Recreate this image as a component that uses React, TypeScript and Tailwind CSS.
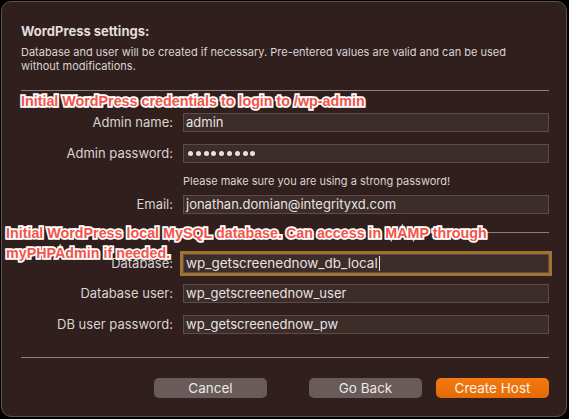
import React from "react";

const ui = "font-['Inter','Noto_Sans',sans-serif]";

function Label({ children }: { children: React.ReactNode }) {
  return (
    <div className="text-right text-[13px] leading-[19px] text-[#d9d3d2] whitespace-nowrap">{children}</div>
  );
}

function Field({ value }: { value: string }) {
  return (
    <div className="h-[19px] bg-[#3c2c2a] border border-[#5b4c4a] px-[2px] text-[13px] leading-[17px] text-[#e6e2e1] whitespace-nowrap overflow-hidden">
      {value}
    </div>
  );
}

function Row({ label, children, className = "" }: { label: string; children: React.ReactNode; className?: string }) {
  return (
    <div className={`grid grid-cols-[152px_1fr] gap-x-[10px] items-center ${className}`}>
      <Label>{label}</Label>
      {children}
    </div>
  );
}

const annot =
  "font-['Liberation_Sans',Arial,sans-serif] font-bold text-[14.3px] tracking-[0px] text-[#f2554a] [-webkit-text-stroke:3.5px_#ffffff] [paint-order:stroke_fill] whitespace-nowrap";

export default function App() {
  return (
    <div className={`w-[569px] h-[419px] bg-black pt-[1px] pl-[1px] ${ui}`}>
      <div className="relative w-[566px] h-[416px] rounded-[10px] border border-[#5e5150] bg-[#311f1e] pl-[19px] pr-[17px] pt-[21px] flex flex-col">
        <div className="text-[13px] leading-[16px] font-bold text-[#e2dddc]">WordPress settings:</div>
        <div className="mt-[7px] text-[11px] leading-[13.5px] text-[#d9d3d2] whitespace-nowrap">
          Database and user will be created if necessary. Pre-entered values are valid and can be used
          <br />
          without modifications.
        </div>
        <div className="mt-[17px] h-px bg-[#8a7e7d]" />
        <div className="h-[22px] flex items-center">
          <span className={annot}>Initial WordPress credentials to login to /wp-admin</span>
        </div>
        <Row label="Admin name:">
          <Field value="admin" />
        </Row>
        <Row label="Admin password:" className="mt-[12px]">
          <div className="h-[19px] bg-[#3c2c2a] border border-[#5b4c4a] pl-[4px] flex items-center gap-[2.8px]">
            {Array.from({ length: 9 }).map((_, i) => (
              <span key={i} className="w-[5px] h-[5px] rounded-full bg-[#e6e2e1]" />
            ))}
          </div>
        </Row>
        <div className="grid grid-cols-[152px_1fr] gap-x-[10px] mt-[11px]">
          <div />
          <div className="text-[11px] leading-[14px] text-[#d9d3d2] whitespace-nowrap">
            Please make sure you are using a strong password!
          </div>
        </div>
        <Row label="Email:" className="mt-[7px]">
          <Field value="jonathan.domian@integrityxd.com" />
        </Row>
        <div className="mt-[18px] h-px bg-[#8a7e7d]" />
        <Row label="Database:" className="mt-[21px]">
          <div className="h-[19px] bg-[#3c2c2a] border border-[#5b4c4a] px-[2px] text-[13.5px] leading-[17px] text-[#e6e2e1] whitespace-nowrap outline-[3px] outline-solid outline-[#a0712f] flex items-center">
            wp_getscreenednow_db_local
            <span className="inline-block w-px h-[15px] bg-[#e6e2e1] ml-[1px]" />
          </div>
        </Row>
        <Row label="Database user:" className="mt-[11px]">
          <Field value="wp_getscreenednow_user" />
        </Row>
        <Row label="DB user password:" className="mt-[12px]">
          <Field value="wp_getscreenednow_pw" />
        </Row>
        <div className="mt-[23px] h-px bg-[#8a7e7d]" />
        <div className="mt-[20px] flex items-center justify-end">
          <button className="w-[113px] h-[20px] rounded-[5px] bg-[#685b59] text-[13.5px] leading-[20px] text-[#ece8e7]">
            Cancel
          </button>
          <button className="ml-[42px] w-[113px] h-[20px] rounded-[5px] bg-[#685b59] text-[13.5px] leading-[20px] text-[#ece8e7]">
            Go Back
          </button>
          <button className="ml-[14px] w-[113px] h-[20px] rounded-[5px] bg-gradient-to-b from-[#f27a10] to-[#e56a05] text-[13.5px] leading-[20px] text-[#fdf1e8]">
            Create Host
          </button>
        </div>

        <div className="absolute left-[4px] top-[221px] leading-[19px]">
          <span className={`${annot} bg-[#311f1e]`}>
            Initial WordPress local MySQL database. Can access in MAMP through
          </span>
          <br />
          <span className={annot}>myPHPAdmin if needed.</span>
        </div>
      </div>
    </div>
  );
}
